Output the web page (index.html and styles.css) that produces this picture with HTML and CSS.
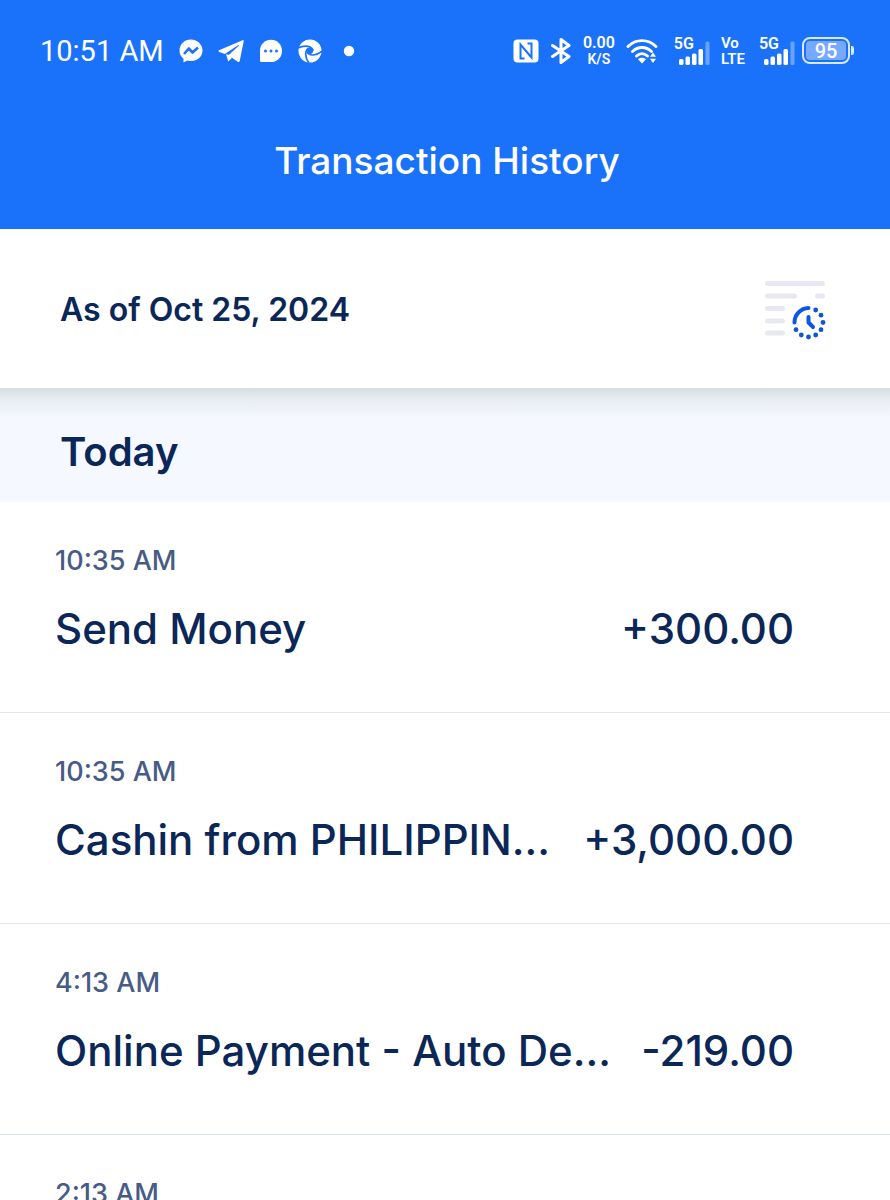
FILE: index.html
```html
<!DOCTYPE html>
<html lang="en">
<head>
<meta charset="utf-8">
<meta name="viewport" content="width=device-width, initial-scale=1">
<title>Transaction History</title>
<link rel="stylesheet" href="styles.css">
</head>
<body>
<div class="app">
  <header class="top">
    <div class="status">
      <div class="status-group">
        <span class="clock">10:51 AM</span>
        <svg class="glyph" viewBox="0 0 24 24" aria-hidden="true"><path fill="#fff" d="M12 .5C5.500.5.5 5.300.5 11.500c0 3.500 1.500 6.200 4 8.200V23.500l3.700-2c1.200.4 2.500.5 3.800.5 6.500 0 11.500-4.600 11.500-10.500S18.500.5 12 .5z"/><path fill="none" stroke="#1a72fb" stroke-width="2.600" stroke-linejoin="round" d="M5 15l4.800-5.500 3.700 4L19 8.500"/></svg>
        <svg class="glyph glyph-wide" viewBox="0 0 26 24" aria-hidden="true"><path fill="#fff" d="M24.500 1.200L1 11.300c-.8.400-.6 1.300.2 1.600l5.700 2L20 6.200c.7-.4 1.200.1.700.6L10.500 16.300l9.200 6.500c.9.600 1.800.2 2-.9L25.700 2.300c.2-.9-.4-1.400-1.200-1.100z"/><path fill="#fff" d="M8 15.300l2.300 7.200 3.700-3.700-3.500-3z"/></svg>
        <svg class="glyph" viewBox="0 0 24 24" aria-hidden="true"><path fill="#fff" d="M12 .8C5.800.8 1 5.500 1 11.800V21.500c0 1 .6 1.600 1.600 1.600H12c6.200 0 11-4.900 11-11.200S18.200.8 12 .8z"/><g fill="#1a72fb"><circle cx="6.500" cy="12" r="1.500"/><circle cx="12" cy="12" r="1.500"/><circle cx="17.500" cy="12" r="1.500"/></g></svg>
        <svg class="glyph" viewBox="0 0 24 24" aria-hidden="true"><circle cx="12" cy="12" r="11.500" fill="#fff"/><g fill="none" stroke="#1a72fb" stroke-width="1.700"><path d="M15 12C14.500 7 7 5.500 0 9"/><path transform="rotate(165 12 12)" d="M15 12C14.500 7 7 5.500 0 9"/><path transform="rotate(260 12 12)" d="M15 12C14.500 7 7 5.500 0 9"/></g><circle cx="12" cy="12" r="3" fill="#1a72fb"/></svg>
        <svg class="glyph" viewBox="0 0 24 24" aria-hidden="true"><circle cx="12" cy="12" r="5.200" fill="#fff"/></svg>
      </div>
      <div class="status-group status-right">
        <svg class="nfc" viewBox="0 0 26 24" aria-hidden="true"><rect x=".5" y=".5" width="25" height="23" rx="4" fill="#fff"/><path fill="none" stroke="#1a72fb" stroke-width="2" d="M11.500 19.500H7.500V5.500L18.500 18.500V4.500H14.500"/></svg>
        <svg class="bt" viewBox="0 0 22 26" aria-hidden="true"><path fill="none" stroke="#fff" stroke-width="3" stroke-linejoin="round" stroke-linecap="round" d="M2.500 7.500L19 18.500l-8 6V1.500l8 6L2.500 18.500"/></svg>
        <span class="stack speed"><span class="stack-big">0.00</span><span class="stack-small">K/S</span></span>
        <svg class="wifi" viewBox="0 0 32 26" aria-hidden="true"><g fill="none" stroke="#fff" stroke-width="2.900" stroke-linecap="round"><path d="M2 8.500c8-7.800 20-7.800 28 0"/><path d="M6.500 13.500c5.500-5.300 13.500-5.300 19 0"/><path d="M10.500 18c3.300-3 7.700-3 11 0"/></g><path fill="#fff" d="M12 21.200c2.300-2 5.700-2 8 0l-4 4.300zM27 14.500l3 4.300h-6zM27 25l3-4.300h-6z"/></svg>
        <span class="signal signal-first"><span class="signal-label">5G</span><svg class="bars" viewBox="0 0 32 26" aria-hidden="true"><g fill="#fff"><rect x="1" y="19" width="4.500" height="6" rx="1.500"/><rect x="7.500" y="16.500" width="4.500" height="8.500" rx="1.500"/><rect x="14" y="13.500" width="4.500" height="11.500" rx="1.500"/><rect x="20.500" y="9" width="4.500" height="16" rx="1.500"/><rect x="27.500" y="1.500" width="4" height="23.500" rx="1.500" opacity=".35"/></g></svg></span>
        <span class="stack volte"><span>Vo</span><span>LTE</span></span>
        <span class="signal signal-second"><span class="signal-label">5G</span><svg class="bars" viewBox="0 0 32 26" aria-hidden="true"><g fill="#fff"><rect x="1" y="19" width="4.500" height="6" rx="1.500"/><rect x="7.500" y="16.500" width="4.500" height="8.500" rx="1.500"/><rect x="14" y="13.500" width="4.500" height="11.500" rx="1.500"/><rect x="20.500" y="9" width="4.500" height="16" rx="1.500"/><rect x="27.500" y="1.500" width="4" height="23.500" rx="1.500" opacity=".35"/></g></svg></span>
        <span class="battery"><span class="battery-level">95</span></span>
      </div>
    </div>
    <h1 class="title">Transaction History</h1>
  </header>
  <section class="asof">
    <p class="asof-date">As of Oct 25, 2024</p>
    <button class="history" type="button" aria-label="Request transaction history">
      <svg class="history-icon" viewBox="0 0 64 60" aria-hidden="true">
        <g stroke="#e8e8f2" stroke-width="5" stroke-linecap="round"><path d="M3.500 3.500h55M3.500 16h27M53.500 16h5M3.500 28.500h15M3.500 41h15M3.500 53h15"/></g>
        <g fill="none" stroke="#0b57e3" stroke-width="4" stroke-linecap="round" stroke-linejoin="round"><path d="M30.500 42.500a14.500 14.500 0 0 1 14-14.500"/><path d="M44.500 37v5.500l4.500 4.500"/></g>
        <g fill="#1255cf"><circle cx="51.700" cy="30" r="2.400"/><circle cx="57" cy="35.200" r="2.400"/><circle cx="59" cy="42.500" r="2.400"/><circle cx="57" cy="49.700" r="2.400"/><circle cx="51.700" cy="55" r="2.400"/><circle cx="44.500" cy="57" r="2.400"/><circle cx="37.300" cy="55" r="2.400"/><circle cx="32" cy="49.700" r="2.400"/></g>
      </svg>
    </button>
  </section>
  <main class="feed">
    <h2 class="day">Today</h2>
    <ul class="list">
      <li class="item"><time class="time">10:35 AM</time><div class="line"><span class="name">Send Money</span><span class="amount">+300.00</span></div></li>
      <li class="item"><time class="time">10:35 AM</time><div class="line"><span class="name">Cashin from PHILIPPIN...</span><span class="amount">+3,000.00</span></div></li>
      <li class="item"><time class="time">4:13 AM</time><div class="line"><span class="name">Online Payment - Auto De...</span><span class="amount">-219.00</span></div></li>
      <li class="item"><time class="time">2:13 AM</time></li>
    </ul>
  </main>
</div>
</body>
</html>
```
FILE: styles.css
```css
* { box-sizing: border-box; }
body {
  margin: 0;
  background: #fff;
  color: #0a2757;
  font-family: Inter, "Open Sans", sans-serif;
}
h1, h2, p, ul { margin: 0; padding: 0; }
.app { height: 100vh; overflow: hidden; }
.top {
  background: #1a72fb;
  color: #fff;
  padding-bottom: 44px;
}
.status {
  display: flex;
  align-items: center;
  justify-content: space-between;
  height: 101px;
  padding: 0 36px 0 40px;
  font-family: Roboto, sans-serif;
}
.status-group { display: flex; align-items: center; gap: 15px; }
.status-right { gap: 11px; }
.clock { font-size: 29px; line-height: 36px; }
.glyph { width: 24px; height: 24px; }
.glyph-wide { width: 26px; }
.nfc { width: 26px; height: 24px; }
.bt { width: 22px; height: 26px; }
.stack {
  display: flex;
  flex-direction: column;
  align-items: center;
  font-weight: 600;
  line-height: 16px;
}
.stack-big { font-size: 16px; }
.stack-small { font-size: 14px; }
.volte { align-items: flex-start; font-size: 15px; }
.wifi { width: 32px; height: 26px; }
.signal { display: flex; align-items: flex-end; height: 30px; }
.signal-first { margin-left: 5px; }
.signal-second { margin-left: 3px; }
.signal-label {
  align-self: flex-start;
  font-size: 16px;
  font-weight: 600;
  line-height: 16px;
  margin-right: -16px;
}
.bars { width: 32px; height: 26px; }
.battery {
  display: flex;
  width: 48px;
  height: 27px;
  padding: 2px;
  margin: 0 4px 0 -4px;
  border: 2px solid #d9e8ff;
  border-radius: 8px;
  position: relative;
}
.battery::after {
  content: "";
  position: absolute;
  top: 7px;
  right: -6px;
  width: 3px;
  height: 9px;
  border-radius: 0 2px 2px 0;
  background: #d9e8ff;
}
.battery-level {
  flex: 1;
  border-radius: 4px;
  background: #76a9fd;
  font-size: 20px;
  font-weight: 500;
  line-height: 20px;
  text-align: center;
}
.title {
  padding: 36px 0 0 4px;
  text-align: center;
  font-size: 37px;
  font-weight: 500;
  line-height: 48px;
}
.asof {
  display: flex;
  align-items: center;
  justify-content: space-between;
  height: 159px;
  padding: 3px 62px 0 60px;
  background: #fff;
}
.asof-date { font-size: 32px; font-weight: 600; line-height: 36px; }
.history { padding: 0; border: 0; background: none; }
.history-icon { display: block; width: 64px; height: 60px; }
.day {
  padding: 36px 60px 22px;
  background: linear-gradient(#d6dce2, #e7ecf1 10px, #f5f8fe 30px);
  font-size: 40px;
  font-weight: 600;
  line-height: 56px;
}
.list { list-style: none; }
.item {
  height: 211px;
  padding: 41px 96px 0 55px;
  border-bottom: 1px solid #dce5ee;
}
.time {
  display: block;
  color: #475c85;
  font-size: 27px;
  font-weight: 500;
  line-height: 36px;
}
.line {
  display: flex;
  justify-content: space-between;
  padding-top: 24px;
  font-size: 42px;
  font-weight: 500;
  line-height: 52px;
  white-space: nowrap;
}
```
